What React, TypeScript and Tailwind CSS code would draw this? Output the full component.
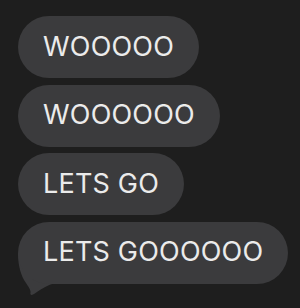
const messages = ["WOOOOO", "WOOOOOO", "LETS GO", "LETS GOOOOOO"];

function Bubble({ text, tail }: { text: string; tail?: boolean }) {
  return (
    <div className="relative self-start">
      {/* tail sits under the bubble so it never covers text */}
      {tail && (
        <svg
          className="absolute left-0 top-0 overflow-visible"
          width="40"
          height="76"
          viewBox="0 0 40 76"
        >
          <path
            d="M0 31 C 0 44, 3 54, 8 61 C 10 64, 13 68, 12.5 70.5 C 12 72.5, 13 73.5, 15 72.5 C 20 70, 26 64, 36 61.5 L 36 31 Z"
            fill="#3b3b3d"
          />
        </svg>
      )}
      <div className="relative h-[62px] flex items-center rounded-full bg-[#3b3b3d] px-[25px] text-[27px] text-[#ebebeb] font-['Inter',sans-serif] tracking-[0.2px]">
        {text}
      </div>
    </div>
  );
}

export default function App() {
  return (
    <div className="w-[300px] h-[308px] bg-[#1e1e1e] pl-[18px] pt-[16px] flex flex-col gap-[6.5px] overflow-hidden">
      {messages.map((m, i) => (
        <Bubble key={i} text={m} tail={i === messages.length - 1} />
      ))}
    </div>
  );
}
